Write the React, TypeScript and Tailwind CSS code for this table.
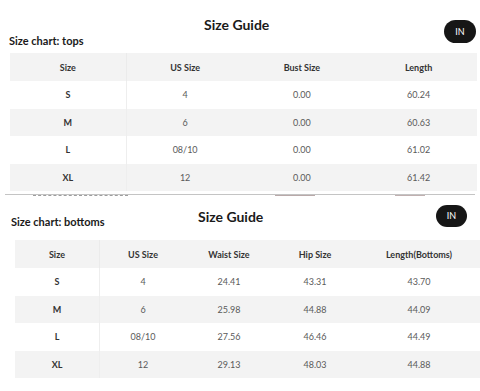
const font = { fontFamily: "Lato, 'Open Sans', sans-serif" };

type Row = string[];

const topsHead = ["Size", "US Size", "Bust Size", "Length"];
const topsRows: Row[] = [
  ["S", "4", "0.00", "60.24"],
  ["M", "6", "0.00", "60.63"],
  ["L", "08/10", "0.00", "61.02"],
  ["XL", "12", "0.00", "61.42"],
];

const bottomsHead = ["Size", "US Size", "Waist Size", "Hip Size", "Length(Bottoms)"];
const bottomsRows: Row[] = [
  ["S", "4", "24.41", "43.31", "43.70"],
  ["M", "6", "25.98", "44.88", "44.09"],
  ["L", "08/10", "27.56", "46.46", "44.49"],
  ["XL", "12", "29.13", "48.03", "44.88"],
];

const SizeTable = ({
  head,
  rows,
  cols,
}: {
  head: string[];
  rows: Row[];
  cols: string;
}) => (
  <div className="text-[9px] leading-none">
    <div className={`grid ${cols} h-[28px] bg-[#f3f3f3] font-bold text-[#333]`}>
      {head.map((h, i) => (
        <div
          key={h}
          className={`flex items-center justify-center ${i === 0 ? "border-r border-[#ebebeb]" : ""}`}
        >
          {h}
        </div>
      ))}
    </div>
    {rows.map((r, ri) => (
      <div
        key={r[0]}
        className={`grid ${cols} h-[27.5px] ${ri % 2 === 1 ? "bg-[#f3f3f3]" : "bg-white"}`}
      >
        {r.map((c, i) => (
          <div
            key={i}
            className={`flex items-center justify-center ${
              i === 0 ? "border-r border-[#eeeeee] font-bold text-[#333]" : "text-[#5a5a5a]"
            }`}
          >
            {c}
          </div>
        ))}
      </div>
    ))}
  </div>
);

const Pill = ({ className }: { className: string }) => (
  <div
    className={`flex items-center justify-center rounded-full bg-[#161616] text-white text-[9px] ${className}`}
  >
    IN
  </div>
);

export default function App() {
  return (
    <div className="w-[480px] h-[391px] bg-white overflow-hidden" style={font}>
      {/* tops */}
      <div className="pt-[16px]">
        <div className="flex items-start h-[18px] pr-[4px]">
          <div className="w-[204px] shrink-0" />
          <h2 className="text-[14px] leading-[17px] font-bold text-[#1a1a1a]">Size Guide</h2>
          <div className="flex-1" />
          <Pill className="mt-[4px] w-[32px] h-[23px]" />
        </div>
        <div className="pl-[9px] text-[11px] leading-[13px] font-bold text-[#1a1a1a]">
          Size chart: tops
        </div>
        <div className="mt-[6px] ml-[10px] mr-[3px]">
          <SizeTable head={topsHead} rows={topsRows} cols="grid-cols-4" />
        </div>
      </div>

      {/* cut line */}
      <div className="mt-[3px] mx-[5px] mr-[5px]">
        <div className="h-[1px] bg-[#c4c4c4]" />
        <div className="flex h-[1px]">
          <div className="w-[28px]" />
          <div className="w-[95px] border-t border-dashed border-[#9d9d9d]" />
          <div className="flex-1" />
          <div className="w-[40px] bg-[#b9a9a9]" />
          <div className="w-[80px]" />
          <div className="w-[30px] bg-[#c0b0b0]" />
          <div className="w-[50px]" />
        </div>
      </div>

      {/* bottoms */}
      <div className="pt-[9px]">
        <div className="flex items-start pl-[11px] pr-[13px]">
          <div className="w-[187px] shrink-0 mt-[10px] text-[11px] leading-[13px] font-bold text-[#1a1a1a]">
            Size chart: bottoms
          </div>
          <h2 className="mt-[3px] text-[14px] leading-[17px] font-bold text-[#1a1a1a]">Size Guide</h2>
          <div className="flex-1" />
          <Pill className="w-[31px] h-[22px]" />
        </div>
        <div className="mt-[12px] ml-[15px]">
          <SizeTable
            head={bottomsHead}
            rows={bottomsRows}
            cols="grid-cols-[85px_86px_86px_86px_1fr]"
          />
        </div>
      </div>
    </div>
  );
}
